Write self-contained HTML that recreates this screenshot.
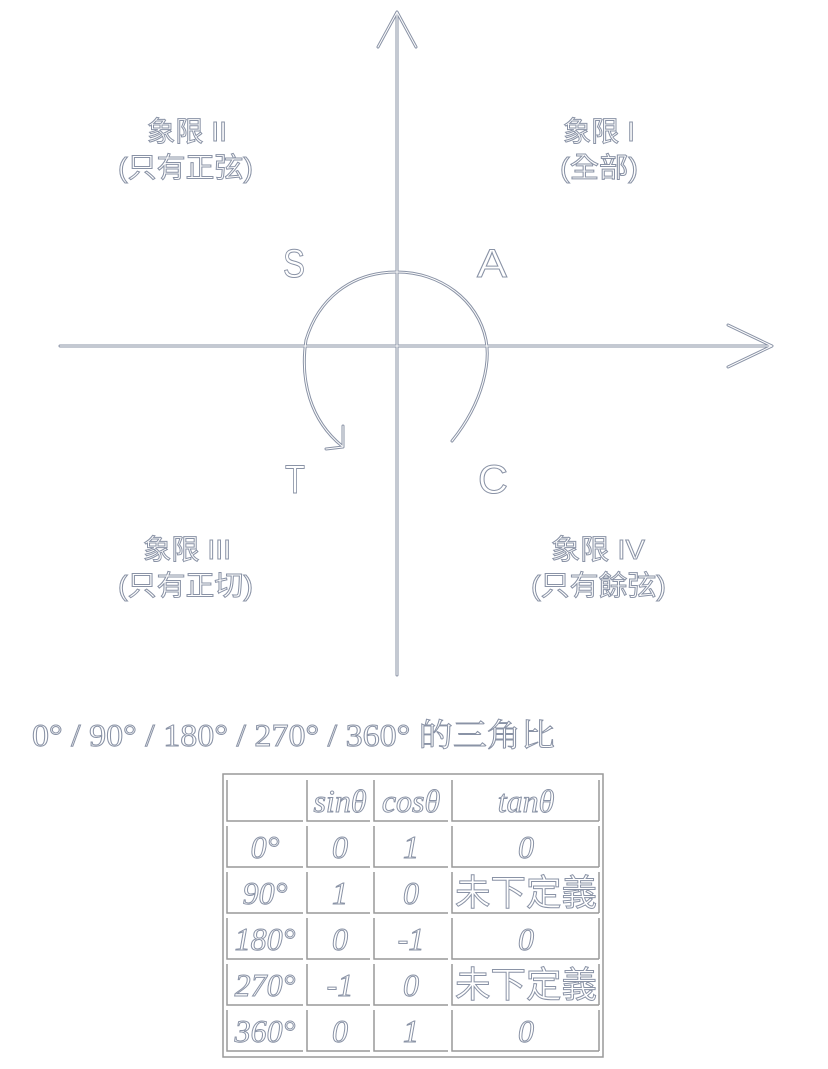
<!DOCTYPE html>
<html><head><meta charset="utf-8"><style>
html,body{margin:0;padding:0;background:#fff;width:828px;height:1069px;overflow:hidden}
svg text{fill:#fff;stroke:#8a93a6;stroke-width:1px}
.cjk{font-family:"Liberation Sans","Noto Sans CJK TC",sans-serif}
.ser{font-family:"Liberation Serif","Noto Serif CJK SC",serif;font-style:italic}
</style></head><body>
<svg width="828" height="1069" xmlns="http://www.w3.org/2000/svg">
<g fill="none" stroke-linecap="round" stroke-linejoin="round">
<g stroke="#8a93a6" stroke-width="3">
<line x1="397" y1="14" x2="397" y2="675"/>
<line x1="60" y1="346" x2="770" y2="346"/>
<path d="M378,47 L397,12 L416,47"/>
<path d="M728,325 L772,346 L728,367"/>
<path d="M452,441 C485,400 490,360 486,340 C478,300 440,272 397,272 C350,272 318,300 306,340 C300,380 310,420 342,446"/>
<path d="M343,426 L343,447 L326,449"/>
</g>
<g stroke="#fff" stroke-width="1">
<line x1="397" y1="14" x2="397" y2="675"/>
<line x1="60" y1="346" x2="770" y2="346"/>
<path d="M378,47 L397,12 L416,47"/>
<path d="M728,325 L772,346 L728,367"/>
<path d="M452,441 C485,400 490,360 486,340 C478,300 440,272 397,272 C350,272 318,300 306,340 C300,380 310,420 342,446"/>
<path d="M343,426 L343,447 L326,449"/>
</g>
</g>
<g class="cjk" font-size="28">
<text x="147" y="141" textLength="80" lengthAdjust="spacingAndGlyphs">象限 II</text>
<text x="118" y="177" textLength="135" lengthAdjust="spacingAndGlyphs">(只有正弦)</text>
<text x="563" y="141" textLength="72" lengthAdjust="spacingAndGlyphs">象限 I</text>
<text x="560" y="177" textLength="78" lengthAdjust="spacingAndGlyphs">(全部)</text>
<text x="143" y="559" textLength="88" lengthAdjust="spacingAndGlyphs">象限 III</text>
<text x="118" y="595" textLength="135" lengthAdjust="spacingAndGlyphs">(只有正切)</text>
<text x="551" y="559" textLength="94" lengthAdjust="spacingAndGlyphs">象限 IV</text>
<text x="531" y="595" textLength="135" lengthAdjust="spacingAndGlyphs">(只有餘弦)</text>
</g>
<g class="cjk" font-size="40" text-anchor="middle">
<text x="294" y="277" textLength="22" lengthAdjust="spacingAndGlyphs">S</text>
<text x="492" y="277" textLength="30" lengthAdjust="spacingAndGlyphs">A</text>
<text x="295" y="493" textLength="20" lengthAdjust="spacingAndGlyphs">T</text>
<text x="493" y="493" textLength="30" lengthAdjust="spacingAndGlyphs">C</text>
</g>
<text x="32" y="746" font-family="'Liberation Serif','Noto Serif CJK SC',serif" font-size="32" textLength="523" lengthAdjust="spacingAndGlyphs">0° / 90° / 180° / 270° / 360° 的三角比</text>
<rect x="223" y="774" width="380" height="283" stroke="#999" fill="none" stroke-width="1.5"/>
<g stroke="#999" fill="none" stroke-width="1.5">
<path d="M227,780 V821 H303 M307,780 V821 H370 M374,780 V821 H448 M452,780 V821 H599 M599,780 V821"/>
<path d="M227,826 V867 H303 M307,826 V867 H370 M374,826 V867 H448 M452,826 V867 H599 M599,826 V867"/>
<path d="M227,872 V913 H303 M307,872 V913 H370 M374,872 V913 H448 M452,872 V913 H599 M599,872 V913"/>
<path d="M227,918 V959 H303 M307,918 V959 H370 M374,918 V959 H448 M452,918 V959 H599 M599,918 V959"/>
<path d="M227,964 V1005 H303 M307,964 V1005 H370 M374,964 V1005 H448 M452,964 V1005 H599 M599,964 V1005"/>
<path d="M227,1010 V1051 H303 M307,1010 V1051 H370 M374,1010 V1051 H448 M452,1010 V1051 H599 M599,1010 V1051"/>
</g>
<g class="ser" font-size="32" text-anchor="middle">
<text x="340" y="812">sinθ</text><text x="411" y="812">cosθ</text><text x="526" y="812">tanθ</text>
<text x="265" y="858">0°</text><text x="340" y="858">0</text><text x="411" y="858">1</text><text x="526" y="858">0</text>
<text x="265" y="904">90°</text><text x="340" y="904">1</text><text x="411" y="904">0</text><text x="526" y="905" class="cjk" font-style="normal" font-size="36" textLength="142" lengthAdjust="spacingAndGlyphs">未下定義</text>
<text x="265" y="950">180°</text><text x="340" y="950">0</text><text x="411" y="950">-1</text><text x="526" y="950">0</text>
<text x="265" y="996">270°</text><text x="340" y="996">-1</text><text x="411" y="996">0</text><text x="526" y="997" class="cjk" font-style="normal" font-size="36" textLength="142" lengthAdjust="spacingAndGlyphs">未下定義</text>
<text x="265" y="1042">360°</text><text x="340" y="1042">0</text><text x="411" y="1042">1</text><text x="526" y="1042">0</text>
</g>
</svg>
</body></html>
